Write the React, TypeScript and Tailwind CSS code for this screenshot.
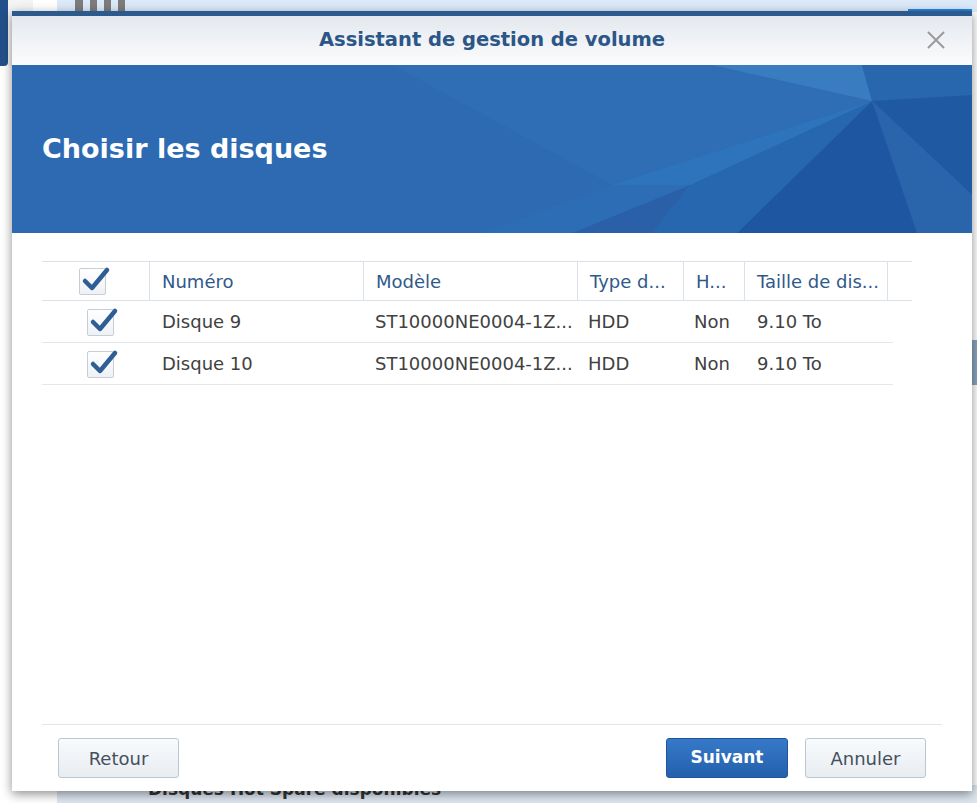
import React from 'react';

const font = { fontFamily: '"DejaVu Sans", Verdana, sans-serif' };

interface Disk {
  name: string;
  model: string;
  type: string;
  hotSpare: string;
  size: string;
}

const disks: Disk[] = [
  { name: 'Disque 9', model: 'ST10000NE0004-1Z...', type: 'HDD', hotSpare: 'Non', size: '9.10 To' },
  { name: 'Disque 10', model: 'ST10000NE0004-1Z...', type: 'HDD', hotSpare: 'Non', size: '9.10 To' },
];

function CheckBox() {
  return (
    <div className="relative h-[27px] w-[27px] rounded-[2px] border border-[#c6cdd5] bg-gradient-to-b from-white to-[#eef1f5]">
      <svg
        className="absolute left-[1px] top-[-5px] overflow-visible"
        width="30"
        height="30"
        viewBox="0 0 30 30"
      >
        <path
          d="M4 17 L11 24 L26 6"
          fill="none"
          stroke="#2f5e95"
          strokeWidth="4.5"
          strokeLinecap="round"
          strokeLinejoin="round"
        />
      </svg>
    </div>
  );
}

function Banner() {
  return (
    <div className="relative h-[168px] bg-[#2d6ab2]">
      <svg className="absolute inset-0" width="960" height="168" viewBox="0 0 960 168" preserveAspectRatio="none">
        <polygon points="380,0 700,0 860,36 600,120" fill="#2f6db5" />
        <polygon points="700,0 850,0 860,36" fill="#3a7cc0" />
        <polygon points="850,0 960,0 960,30 860,36" fill="#2866ad" />
        <polygon points="860,36 960,30 960,130" fill="#1f59a2" />
        <polygon points="860,36 960,130 960,168 905,168" fill="#2a64ab" />
        <polygon points="860,36 905,168 725,168" fill="#1e56a1" />
        <polygon points="860,36 725,168 640,168 678,120" fill="#2667b0" />
        <polygon points="600,120 860,36 678,120" fill="#2e74bd" />
        <polygon points="560,168 678,120 640,168" fill="#2a60a8" />
        <polygon points="470,168 600,120 678,120 560,168" fill="#2c6db6" />
      </svg>
      <h1
        className="relative pl-[30px] pt-[66px] text-[27px] font-bold leading-[36px] text-white"
        style={font}
      >
        Choisir les disques
      </h1>
    </div>
  );
}

function DiskTable() {
  const cols = ['w-[108px]', 'w-[214px]', 'w-[214px]', 'w-[106px]', 'w-[61px]', 'w-[143px]'];
  const headers = ['Numéro', 'Modèle', 'Type d...', 'H...', 'Taille de dis...'];
  return (
    <div className="w-[870px] text-[18px]" style={font}>
      <div className="flex h-[40px] border-y border-[#dbe1e8] text-[#30598a]">
        <div className={`${cols[0]} flex items-center justify-center border-r border-[#dbe1e8] pr-[6px]`}>
          <CheckBox />
        </div>
        {headers.map((h, i) => (
          <div
            key={h}
            className={`${cols[i + 1]} flex items-center overflow-hidden border-r border-[#dbe1e8] pl-[12px] whitespace-nowrap`}
          >
            {h}
          </div>
        ))}
      </div>
      {disks.map((d) => (
        <div key={d.name} className="flex h-[42px] w-[851px] border-b border-[#e3e7ec] text-[#414141]">
          <div className={`${cols[0]} flex items-center justify-center pl-[9px] pt-[2px]`}>
            <CheckBox />
          </div>
          <div className={`${cols[1]} flex items-center pl-[12px]`}>{d.name}</div>
          <div className={`${cols[2]} flex items-center pl-[11px] whitespace-nowrap`}>{d.model}</div>
          <div className={`${cols[3]} flex items-center pl-[10px]`}>{d.type}</div>
          <div className={`${cols[4]} flex items-center pl-[10px]`}>{d.hotSpare}</div>
          <div className={`${cols[5]} flex items-center pl-[12px] whitespace-nowrap`}>{d.size}</div>
        </div>
      ))}
    </div>
  );
}

function GrayButton({ label }: { label: string }) {
  return (
    <button
      className="h-[40px] w-[121px] rounded-[3px] border border-[#bcc6d1] bg-gradient-to-b from-[#f8fafc] to-[#e8edf2] text-[18px] text-[#45505c]"
      style={font}
    >
      {label}
    </button>
  );
}

export default function App() {
  return (
    <div className="relative h-[803px] w-[977px] overflow-hidden bg-white">
      {/* page behind the dialog */}
      <div className="flex h-full">
        <div className="flex w-[57px] flex-col">
          <div className="flex">
            <div className="h-[66px] w-[8px] rounded-br-[4px] bg-[#24508a]" />
            <div className="h-[66px] w-[25px] bg-[#f4f4f4]" />
          </div>
        </div>
        <div className="flex flex-1 flex-col">
          <div className="flex h-[12px] gap-[7px] bg-[#dce9f8] pl-[18px]">
            <div className="h-full w-[8px] bg-[#7c7c7c]" />
            <div className="h-full w-[7px] bg-[#7c7c7c]" />
            <div className="h-full w-[7px] bg-[#7c7c7c]" />
            <div className="h-full w-[7px] bg-[#7c7c7c]" />
          </div>
          <div className="flex-1" />
          <div className="h-[18px] bg-[#dde6f0] pl-[91px]">
            <div className="mt-[-6px] text-[17px] leading-[20px] font-bold text-[#333]" style={font}>
              Disques Hot Spare disponibles
            </div>
          </div>
        </div>
      </div>
      <div className="absolute right-0 top-[340px] h-[45px] w-[5px] bg-[#8ba4be]" />
      <div className="absolute right-[5px] top-[9px] h-[6px] w-[64px] bg-[#1e88e5]" />

      {/* dialog */}
      <div className="absolute left-[12px] top-[11px] flex h-[780px] w-[960px] flex-col border-t-[5px] border-[#2c5a8f] bg-white shadow-[0_3px_10px_rgba(0,0,0,0.45)]">
        <div className="relative flex h-[49px] items-center justify-center bg-gradient-to-b from-[#e4e8ee] to-[#fbfcfd]">
          <span className="pb-[1px] text-[19.5px] font-bold text-[#2b5687]" style={font}>
            Assistant de gestion de volume
          </span>
          <svg className="absolute right-[27px] top-[15px]" width="18" height="18" viewBox="0 0 18 18">
            <path d="M1 1 L17 17 M17 1 L1 17" stroke="#9a9a9a" strokeWidth="2" />
          </svg>
        </div>
        <Banner />
        <div className="flex flex-1 flex-col px-[30px] pt-[28px]">
          <DiskTable />
          <div className="flex-1" />
          <div className="flex h-[67px] items-start border-t border-[#e2e6eb] pt-[13px] pl-[16px] pr-[16px]">
            <GrayButton label="Retour" />
            <div className="flex-1" />
            <button
              className="h-[40px] w-[122px] rounded-[3px] border border-[#1f5699] bg-gradient-to-b from-[#3679c9] to-[#2460ac] text-[17px] font-bold text-white"
              style={font}
            >
              Suivant
            </button>
            <div className="w-[17px]" />
            <GrayButton label="Annuler" />
          </div>
        </div>
      </div>
    </div>
  );
}
